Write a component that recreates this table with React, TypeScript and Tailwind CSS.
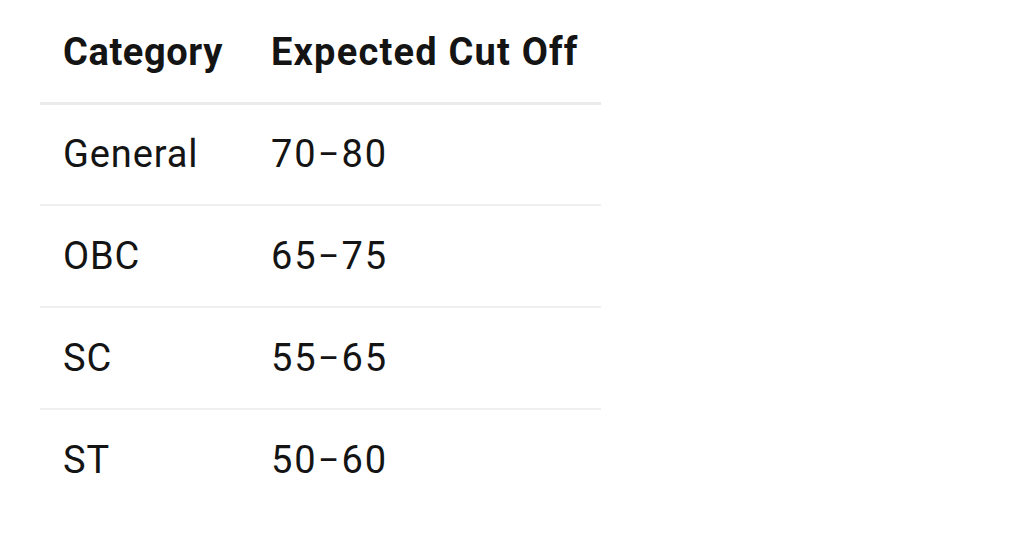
import React from 'react';

const rows = [
  { category: 'General', cutoff: '70\u221280' },
  { category: 'OBC', cutoff: '65\u221275' },
  { category: 'SC', cutoff: '55\u221265' },
  { category: 'ST', cutoff: '50\u221260' },
];

export default function App() {
  return (
    <div className="w-[1024px] h-[544px] bg-white overflow-hidden font-['Roboto',sans-serif] text-[#141414]">
      <table className="ml-[40px] w-[561px] border-collapse">
        <thead>
          <tr className="h-[103px] border-b-[3px] border-[#ebebeb]">
            <th className="w-[231px] pl-[23px] pt-[3px] text-left text-[38px] font-bold tracking-[0.6px]">Category</th>
            <th className="pt-[3px] text-left text-[38px] font-bold tracking-[1.2px]">Expected Cut Off</th>
          </tr>
        </thead>
        <tbody>
          {rows.map((row, i) => (
            <tr key={row.category} className={`h-[102px] ${i < rows.length - 1 ? 'border-b-2 border-[#f0f0f0]' : ''}`}>
              <td className="pl-[23px] text-[38px] tracking-[0.9px]">{row.category}</td>
              <td className="text-[38px] tracking-[2px]">{row.cutoff}</td>
            </tr>
          ))}
        </tbody>
      </table>
    </div>
  );
}
